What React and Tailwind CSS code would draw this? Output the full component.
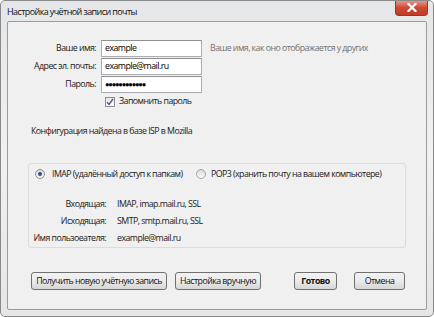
import React from 'react';

const Input = ({ value, password }) => (
  <div className="h-[17px] w-[101px] border border-[#abadb3] border-t-[#8e8f8f] bg-white px-[3px] flex items-center text-[#000]">
    {password ? <span className="tracking-[-1.2px] text-[7.5px]">{value}</span> : value}
  </div>
);

const Button = ({ children, bold, className = '' }) => (
  <button
    className={`h-[18px] rounded-[3px] border border-[#707070] bg-gradient-to-b from-[#f2f2f2] via-[#ebebeb] to-[#d6d6d6] text-[#111] flex items-center justify-center whitespace-nowrap ${bold ? 'font-bold' : ''} ${className}`}
  >
    {children}
  </button>
);

export default function App() {
  return (
    <div
      className="w-[434px] h-[317px] bg-gradient-to-b from-[#e4e6e8] via-[#f1f1f1] to-[#e6e6e6] border border-[#8a8a8a] rounded-[5px] flex flex-col text-[8.8px] tracking-[-0.55px] text-[#1a1a1a] overflow-hidden whitespace-nowrap"
      style={{ fontFamily: '"Open Sans", "Noto Sans", sans-serif' }}
    >
      {/* title bar */}
      <div className="h-[20px] flex items-start justify-between pl-[6px] pr-[5px]">
        <span className="mt-[4px] text-[9px] tracking-[-0.6px] text-[#111]">Настройка учётной записи почты</span>
        <div className="w-[33px] h-[16px] -mt-[1px] rounded-b-[4px] border border-[#8b3a30] border-t-0 bg-gradient-to-b from-[#e8a095] via-[#cf4a36] to-[#c23a25] flex items-center justify-center">
          <svg width="10" height="9" viewBox="0 0 10 9">
            <path d="M1.5 1 L8.5 8 M8.5 1 L1.5 8" stroke="#fff" strokeWidth="2.2" strokeLinecap="square" />
          </svg>
        </div>
      </div>

      {/* content */}
      <div className="flex-1 mx-[6px] mb-[6px] border border-[#9b9b9b] rounded-[2px] bg-[#f0f0f0] flex flex-col pt-[18px]">
        <div className="grid grid-cols-[88px_101px_auto] gap-x-[5px] gap-y-[1px] items-center">
          <span className="text-right">Ваше имя:</span>
          <Input value="example" />
          <span className="pl-[3px] text-[#727272]">Ваше имя, как оно отображается у других</span>

          <span className="text-right">Адрес эл. почты:</span>
          <Input value="example@mail.ru" />
          <span />

          <span className="text-right">Пароль:</span>
          <Input value="●●●●●●●●●●●●" password />
          <span />
        </div>

        <div className="flex items-center gap-[4px] ml-[97px] mt-[2px]">
          <div className="w-[10px] h-[10px] border border-[#8f8f8f] bg-gradient-to-b from-[#e6e6e6] to-[#fafafa] flex items-center justify-center">
            <svg width="8" height="8" viewBox="0 0 8 8">
              <path d="M1 4.2 L3 6.5 L7 1" stroke="#4a5a78" strokeWidth="1.3" fill="none" />
            </svg>
          </div>
          <span>Запомнить пароль</span>
        </div>

        <div className="ml-[23px] mt-[17px]">Конфигурация найдена в базе ISP в Mozilla</div>

        <div className="mt-[25px] ml-[20px] mr-[20px] h-[85px] border border-[#dcdcdc] rounded-[3px] flex flex-col pt-[3px]">
          <div className="flex items-center h-[14px]">
            <div className="ml-[6px] w-[10px] h-[10px] rounded-full border border-[#8e8f8f] bg-gradient-to-b from-[#dadada] to-[#fafafa] flex items-center justify-center">
              <div className="w-[4px] h-[4px] rounded-full bg-[#2d4f7c]" />
            </div>
            <span className="ml-[7px] w-[144px]">IMAP (удалённый доступ к папкам)</span>
            <div className="w-[10px] h-[10px] rounded-full border border-[#a5a5a5] bg-gradient-to-b from-[#dadada] to-[#fafafa]" />
            <span className="ml-[5px]">POP3 (хранить почту на вашем компьютере)</span>
          </div>

          <div className="grid grid-cols-[77px_auto] gap-x-[11px] gap-y-[3px] mt-[16px] leading-[14px]">
            <span className="text-right">Входящая:</span>
            <span>IMAP, imap.mail.ru, SSL</span>
            <span className="text-right">Исходящая:</span>
            <span>SMTP, smtp.mail.ru, SSL</span>
            <span className="text-right">Имя пользоеателя:</span>
            <span>example@mail.ru</span>
          </div>
        </div>

        <div className="flex items-center mt-[24px] ml-[23px]">
          <Button className="w-[136px]">Получить новую учётную запись</Button>
          <Button className="w-[86px] ml-[8px]">Настройка вручную</Button>
          <Button bold className="w-[43px] ml-[33px]">Готово</Button>
          <Button className="w-[51px] ml-[17px]">Отмена</Button>
        </div>
      </div>
    </div>
  );
}
